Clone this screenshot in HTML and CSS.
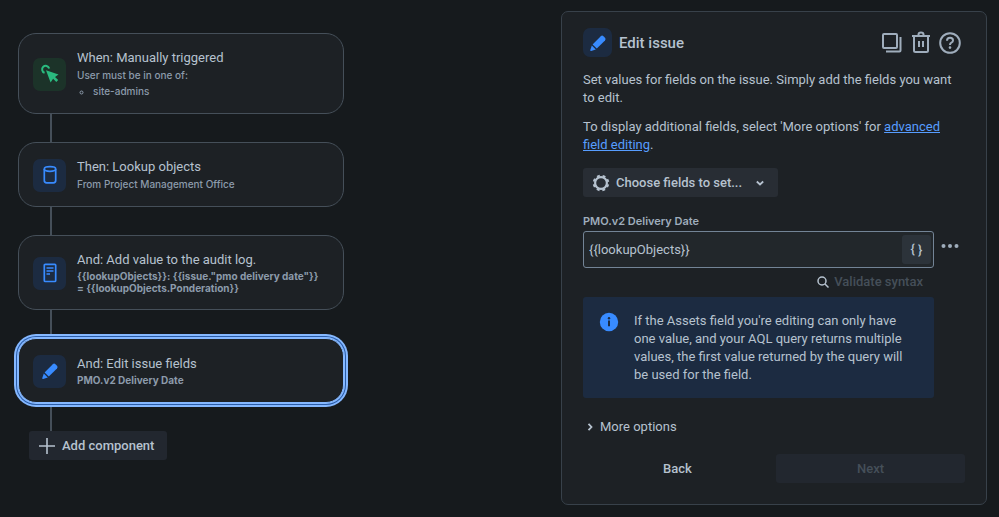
FILE: index.html
```html
<!DOCTYPE html>
<html lang="en">
  <head>
    <meta charset="UTF-8" />
    <meta name="viewport" content="width=device-width, initial-scale=1.0" />
    <title>Edit issue</title>
    <link rel="stylesheet" href="styles.css">
  </head>
  <body>
    <main class="layout">
      <section class="flow">
        <article class="card">
          <span class="tile green">
            <svg width="20" height="20" viewBox="0 0 20 20" fill="none" stroke="currentColor" stroke-width="2">
              <path d="M4.6 8.8A3.6 3.6 0 1 1 9.2 4.4" />
              <path d="M6 6.2l12.5 4.3-3.5 2.4 3.2 3.2-1.9 1.9-3.2-3.2-2.5 3.6z" fill="currentColor" stroke="none" />
            </svg>
          </span>
          <div class="info">
            <h2>When: Manually triggered</h2>
            <p>User must be in one of:</p>
            <ul>
              <li>site-admins</li>
            </ul>
          </div>
        </article>
        <div class="line"></div>
        <article class="card">
          <span class="tile">
            <svg width="20" height="20" viewBox="0 0 20 20" fill="none" stroke="currentColor" stroke-width="1.7">
              <ellipse cx="10" cy="4" rx="5.7" ry="2.3" />
              <path d="M4.3 4v11.5q0 2.3 2.3 2.3h6.8q2.3 0 2.3-2.3V4" />
            </svg>
          </span>
          <div class="info">
            <h2>Then: Lookup objects</h2>
            <p>From Project Management Office</p>
          </div>
        </article>
        <div class="line"></div>
        <article class="card">
          <span class="tile">
            <svg width="20" height="20" viewBox="0 0 20 20" fill="none" stroke="currentColor" stroke-width="1.7">
              <rect x="4.3" y="1.3" width="11.4" height="17.2" rx="1" />
              <path d="M6.5 5h7M6.5 8h7M6.5 11h3.5" stroke-width="1.5" />
            </svg>
          </span>
          <div class="info">
            <h2>And: Add value to the audit log.</h2>
            <p class="strong">{{lookupObjects}}: {{issue."pmo delivery date"}} = {{lookupObjects.Ponderation}}</p>
          </div>
        </article>
        <div class="line"></div>
        <article class="card selected">
          <span class="tile">
            <svg width="20" height="20" viewBox="0 0 20 20" fill="currentColor">
              <path d="M12.8 3.2q1.3-1.2 2.6 0l1.6 1.6q1.2 1.3 0 2.6l-8.2 8.2-4.2-4.2z" />
              <path d="M3.8 12.4l4 4-4.6 1.5q-1.2.2-.9-.9z" />
            </svg>
          </span>
          <div class="info">
            <h2>And: Edit issue fields</h2>
            <p class="strong">PMO.v2 Delivery Date</p>
          </div>
        </article>
        <div class="line"></div>
        <button class="btn add" type="button">
          <svg width="16" height="16" viewBox="0 0 16 16" stroke="currentColor" stroke-width="1.6">
            <path d="M8 0v16M0 8h16" />
          </svg>
          Add component
        </button>
      </section>

      <form class="panel">
        <header class="panel-header">
          <span class="tile small">
            <svg width="20" height="20" viewBox="0 0 20 20" fill="currentColor">
              <path d="M12.8 3.2q1.3-1.2 2.6 0l1.6 1.6q1.2 1.3 0 2.6l-8.2 8.2-4.2-4.2z" />
              <path d="M3.8 12.4l4 4-4.6 1.5q-1.2.2-.9-.9z" />
            </svg>
          </span>
          <h1>Edit issue</h1>
          <div class="actions">
            <button class="icon-btn" type="button" aria-label="Duplicate">
              <svg width="24" height="24" viewBox="0 0 24 24" fill="none" stroke="currentColor" stroke-width="2">
                <rect x="3" y="3" width="14" height="14" rx="1" />
                <path d="M20.5 6v13.5q0 1-1 1H6" />
              </svg>
            </button>
            <button class="icon-btn" type="button" aria-label="Delete">
              <svg width="24" height="24" viewBox="0 0 24 24" fill="none" stroke="currentColor" stroke-width="2">
                <path d="M3 5h18M5 5v14.5q0 1.5 1.5 1.5h11q1.5 0 1.5-1.5V5M9.5 5V3.5q0-2 2.5-2t2.5 2V5M10 10v6M14 10v6" />
              </svg>
            </button>
            <button class="icon-btn" type="button" aria-label="Help">
              <svg width="24" height="24" viewBox="0 0 24 24" fill="none" stroke="currentColor" stroke-width="2">
                <circle cx="12" cy="12" r="9.8" />
                <path d="M9 9.7q0-2.9 3-2.9t3 2.7q0 1.5-1.6 2.2-1.4.7-1.4 2.3" />
                <circle cx="12" cy="16.6" r="1.3" fill="currentColor" stroke="none" />
              </svg>
            </button>
          </div>
        </header>

        <p class="text">Set values for fields on the issue. Simply add the fields you want to edit.</p>
        <p class="text">To display additional fields, select 'More options' for <a href="#">advanced field editing</a>.</p>

        <button class="btn choose" type="button">
          <svg width="18" height="18" viewBox="0 0 18 18" fill="none" stroke="currentColor">
            <circle cx="9" cy="9" r="5.9" stroke-width="2.2" />
            <circle cx="9" cy="9" r="7.3" stroke-width="2" stroke-dasharray="2.867 2.867" stroke-dashoffset="-1.433" />
          </svg>
          Choose fields to set...
          <svg class="chevron" width="10" height="10" viewBox="0 0 10 10" fill="none" stroke="currentColor" stroke-width="1.8">
            <path d="M1.8 3.5L5 6.5l3.2-3" />
          </svg>
        </button>

        <label class="label" for="date">PMO.v2 Delivery Date</label>
        <div class="row">
          <div class="field">
            <input id="date" type="text" value="{{lookupObjects}}" />
            <button class="smart" type="button">{ }</button>
          </div>
          <button class="icon-btn" type="button" aria-label="More actions">
            <svg width="18" height="6" viewBox="0 0 18 6" fill="currentColor">
              <circle cx="2.5" cy="3" r="2" />
              <circle cx="9" cy="3" r="2" />
              <circle cx="15.5" cy="3" r="2" />
            </svg>
          </button>
        </div>

        <div class="narrow">
          <button class="validate" type="button" disabled>
            <svg width="12" height="12" viewBox="0 0 12 12" fill="none" stroke="currentColor" stroke-width="1.5">
              <circle cx="5" cy="5" r="4" />
              <path d="M8 8l3.5 3.5" />
            </svg>
            Validate syntax
          </button>
          <div class="message">
            <svg width="20" height="20" viewBox="0 0 20 20">
              <circle class="disc" cx="10" cy="10" r="9.2" />
              <circle class="mark" cx="10" cy="6.3" r="1.2" />
              <path class="mark" d="M9 8.6h2v5.6H9z" />
            </svg>
            <p>If the Assets field you're editing can only have one value, and your AQL query returns multiple values, the first value returned by the query will be used for the field.</p>
          </div>
        </div>

        <button class="more" type="button">
          <svg width="10" height="10" viewBox="0 0 10 10" fill="none" stroke="currentColor" stroke-width="1.8">
            <path d="M3.5 1.8L6.5 5l-3 3.2" />
          </svg>
          More options
        </button>

        <footer class="footer">
          <button class="btn back" type="button">Back</button>
          <button class="btn next" type="submit" disabled>Next</button>
        </footer>
      </form>
    </main>
  </body>
</html>
```
FILE: styles.css
```css
* {
  padding: 0;
  margin: 0;
  box-sizing: border-box;
}

body {
  background: #161a1d;
  color: #b6c2cf;
  font-family: Roboto, "Liberation Sans", sans-serif;
  font-size: 13px;
  line-height: 18px;
}

button,
input {
  border: none;
  background: none;
  color: inherit;
  font: inherit;
}

svg {
  display: block;
  flex: none;
}

.layout {
  display: flex;
  justify-content: space-between;
  align-items: flex-start;
  gap: 24px;
  padding: 11px 12px 12px 18px;
}

/* rule chain */
.flow {
  flex: 1;
  max-width: 326px;
  padding-top: 22px;
}

.card {
  display: flex;
  align-items: center;
  gap: 11px;
  min-height: 65px;
  padding: 15px 18px 14px 14px;
  background: #1d2125;
  border: 1px solid #454f59;
  border-radius: 18px;
}

/* keeps the ring above the connector */
.selected {
  position: relative;
  border: 1px solid #85b8ff;
  box-shadow: 0 0 0 1px #85b8ff, 0 0 0 2px #2a5ca8, 0 0 0 4px #85b8ff;
}

.line {
  width: 2px;
  height: 28px;
  margin-left: 32px;
  background: #454f59;
}

.tile {
  display: flex;
  flex: none;
  align-items: center;
  justify-content: center;
  width: 33px;
  height: 33px;
  border-radius: 7px;
  background: #1c2b41;
  color: #388bff;
}

.green {
  background: #1c3329;
  color: #2abb7f;
}

.small {
  width: 29px;
  height: 29px;
}

.info h2 {
  font-size: 13px;
  font-weight: 400;
}

.info p,
.info li {
  color: #8c9bab;
  font-family: Inter, "Liberation Sans", sans-serif;
  font-size: 10px;
  font-weight: 500;
  line-height: 16px;
}

.info ul {
  padding-left: 16px;
  list-style: circle;
}

.info .strong {
  padding: 1px 0;
  font-weight: 700;
  line-height: 12px;
}

/* buttons */
.btn {
  display: flex;
  align-items: center;
  height: 29px;
  padding: 0 10px;
  border-radius: 3px;
  background: #22272f;
  font-weight: 500;
}

.add {
  gap: 7px;
  margin-left: 11px;
  padding-right: 13px;
}

.icon-btn {
  color: #9fadbc;
}

/* edit panel */
.panel {
  flex: 0 1 426px;
  padding: 16px 21px 21px;
  background: #1d2125;
  border: 1px solid #38414a;
  border-radius: 7px;
}

.panel-header {
  display: flex;
  align-items: center;
  gap: 7px;
  margin-bottom: 14px;
}

.panel-header h1 {
  flex: 1;
  font-size: 15px;
  font-weight: 500;
}

.actions {
  display: flex;
  gap: 5px;
  margin-right: 3px;
}

.text {
  margin-bottom: 11px;
}

.text a {
  color: #579dff;
}

.choose {
  gap: 6px;
  margin: 14px 0 16px;
  padding: 0 13px 0 9px;
  background: #282d34;
}

.chevron {
  margin-left: 7px;
}

.label {
  display: block;
  margin-bottom: 2px;
  color: #9fadbc;
  font-family: Inter, "Liberation Sans", sans-serif;
  font-size: 11px;
  font-weight: 600;
  line-height: 16px;
}

.row {
  display: flex;
  gap: 7px;
  margin-right: 6px;
}

.row .icon-btn {
  height: 29px;
}

.field {
  display: flex;
  flex: 1;
  align-items: center;
  height: 37px;
  padding: 0 2px 0 5px;
  background: #22272b;
  border: 1px solid #738496;
  border-radius: 3px;
}

.field input {
  flex: 1;
  min-width: 0;
  outline: none;
}

.smart {
  width: 29px;
  height: 29px;
  border-radius: 3px;
  background: #2c333a;
  font-weight: 500;
}

.narrow {
  margin-right: 31px;
}

.validate {
  display: flex;
  align-items: center;
  gap: 5px;
  margin: 5px 11px 6px auto;
  color: #454f59;
  font-weight: 500;
}

.validate svg {
  color: #b6c2cf;
}

.message {
  display: flex;
  gap: 15px;
  padding: 15px 16px 14px;
  border-radius: 3px;
  background: #1c2b41;
}

.message .disc {
  fill: #388bff;
}

.message .mark {
  fill: #1c2b41;
}

.more {
  display: flex;
  align-items: center;
  gap: 5px;
  margin: 20px 0 18px 2px;
}

.footer {
  display: flex;
  gap: 4px;
}

.footer .btn {
  flex: 1;
  justify-content: center;
}

.footer .back {
  background: none;
}

.footer .next {
  color: #454f59;
}
```
